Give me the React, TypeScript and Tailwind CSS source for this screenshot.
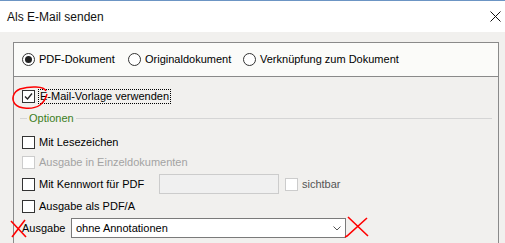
import React from 'react';

const Check: React.FC<{ checked?: boolean; disabled?: boolean }> = ({ checked, disabled }) => (
  <span
    className={`flex h-[13px] w-[13px] shrink-0 items-center justify-center border bg-white ${
      disabled ? 'border-[#cccccc]' : 'border-[#333333]'
    }`}
  >
    {checked && (
      <svg width="9" height="9" viewBox="0 0 9 9">
        <path d="M1 4.5 L3.5 7 L8 1.5" fill="none" stroke="#222" strokeWidth="1.3" />
      </svg>
    )}
  </span>
);

const Radio: React.FC<{ checked?: boolean; label: string; className?: string }> = ({ checked, label, className }) => (
  <div className={`flex items-center gap-[4px] ${className ?? ''}`}>
    <span className="flex h-[13px] w-[13px] shrink-0 items-center justify-center rounded-full border border-[#333333] bg-white">
      {checked && <span className="h-[7px] w-[7px] rounded-full bg-[#222222]" />}
    </span>
    <span>{label}</span>
  </div>
);

export default function App() {
  return (
    <div
      className="relative flex h-[243px] w-[505px] flex-col overflow-hidden border-t border-[#6c95c4] bg-[#f1f0ee] text-[11px] text-black"
      style={{ fontFamily: '"Liberation Sans", Arial, sans-serif' }}
    >
      <header className="flex h-[31px] shrink-0 items-center justify-between bg-white pl-[7px] pr-[3px]">
        <span className="text-[12px] text-[#111]">Als E-Mail senden</span>
        <svg width="11" height="11" viewBox="0 0 11 11" className="mr-[1px]">
          <path d="M0.5 0.5 L10.5 10.5 M10.5 0.5 L0.5 10.5" stroke="#111" strokeWidth="1" />
        </svg>
      </header>

      <main className="flex flex-1 flex-col pl-[13px] pr-[6px] pt-[10px]">
        <div className="flex flex-1 flex-col border border-b-0 border-[#8a8a8a]">
          <div className="flex h-[34px] shrink-0 items-center border-b border-[#8a8a8a] bg-[#fbfbf9] pl-[8px]">
            <Radio checked label="PDF-Dokument" className="w-[106px]" />
            <Radio label="Originaldokument" className="w-[115px]" />
            <Radio label="Verknüpfung zum Dokument" />
          </div>

          <div className="flex flex-col pl-[8px] pr-[6px]">
            <div className="mt-[12px] flex h-[14px] items-center">
              <Check checked />
              <span className="ml-[3px] flex h-[15px] items-center border border-dotted border-black px-[1px]">
                E-Mail-Vorlage verwenden
              </span>
            </div>

            <div className="-ml-[2px] mt-[8px] flex h-[14px] items-center">
              <span className="h-px w-[7px] bg-[#d5d5d5]" />
              <span className="px-[2px] text-[#3b7d1c]">Optionen</span>
              <span className="h-px flex-1 bg-[#d5d5d5]" />
            </div>

            <div className="mt-[11px] flex h-[13px] items-center gap-[4px]">
              <Check />
              <span>Mit Lesezeichen</span>
            </div>

            <div className="mt-[7px] flex h-[13px] items-center gap-[4px]">
              <Check disabled />
              <span className="text-[#a3a3a3]">Ausgabe in Einzeldokumenten</span>
            </div>

            <div className="mt-[5px] flex h-[20px] items-center">
              <Check />
              <span className="ml-[4px] w-[120px]">Mit Kennwort für PDF</span>
              <span className="h-[20px] w-[120px] border border-[#cccccc] bg-[#f0f0f0]" />
              <span className="ml-[6px]">
                <Check disabled />
              </span>
              <span className="ml-[4px] text-[#555]">sichtbar</span>
            </div>

            <div className="mt-[6px] flex h-[13px] items-center gap-[4px]">
              <Check />
              <span>Ausgabe als PDF/A</span>
            </div>

            <div className="mt-[5px] flex h-[20px] items-center">
              <span className="w-[49px]">Ausgabe</span>
              <div className="flex h-[20px] w-[275px] items-center justify-between border border-[#7a7a7a] bg-white pl-[4px] pr-[4px]">
                <span>ohne Annotationen</span>
                <svg width="8" height="5" viewBox="0 0 8 5">
                  <path d="M0.5 0.5 L4 4 L7.5 0.5" fill="none" stroke="#555" strokeWidth="1" />
                </svg>
              </div>
            </div>
          </div>
        </div>
      </main>

      {/* red annotation marks */}
      <svg className="pointer-events-none absolute left-0 top-0" width="505" height="243" viewBox="0 0 505 243">
        <path
          d="M46 90 C44 85 30 85 20 88 C13 91 11 98 15 103 C19 108 33 109 40 104 C44 101 46 97 47 93"
          fill="none"
          stroke="#ff0000"
          strokeWidth="1.5"
        />
        <path d="M11 220 L26 236 M25 219 L12 236" fill="none" stroke="#ff0000" strokeWidth="1.6" />
        <path d="M348 216 L368 235 M367 217 L347 235 L345 236" fill="none" stroke="#ff0000" strokeWidth="1.6" />
      </svg>
    </div>
  );
}
